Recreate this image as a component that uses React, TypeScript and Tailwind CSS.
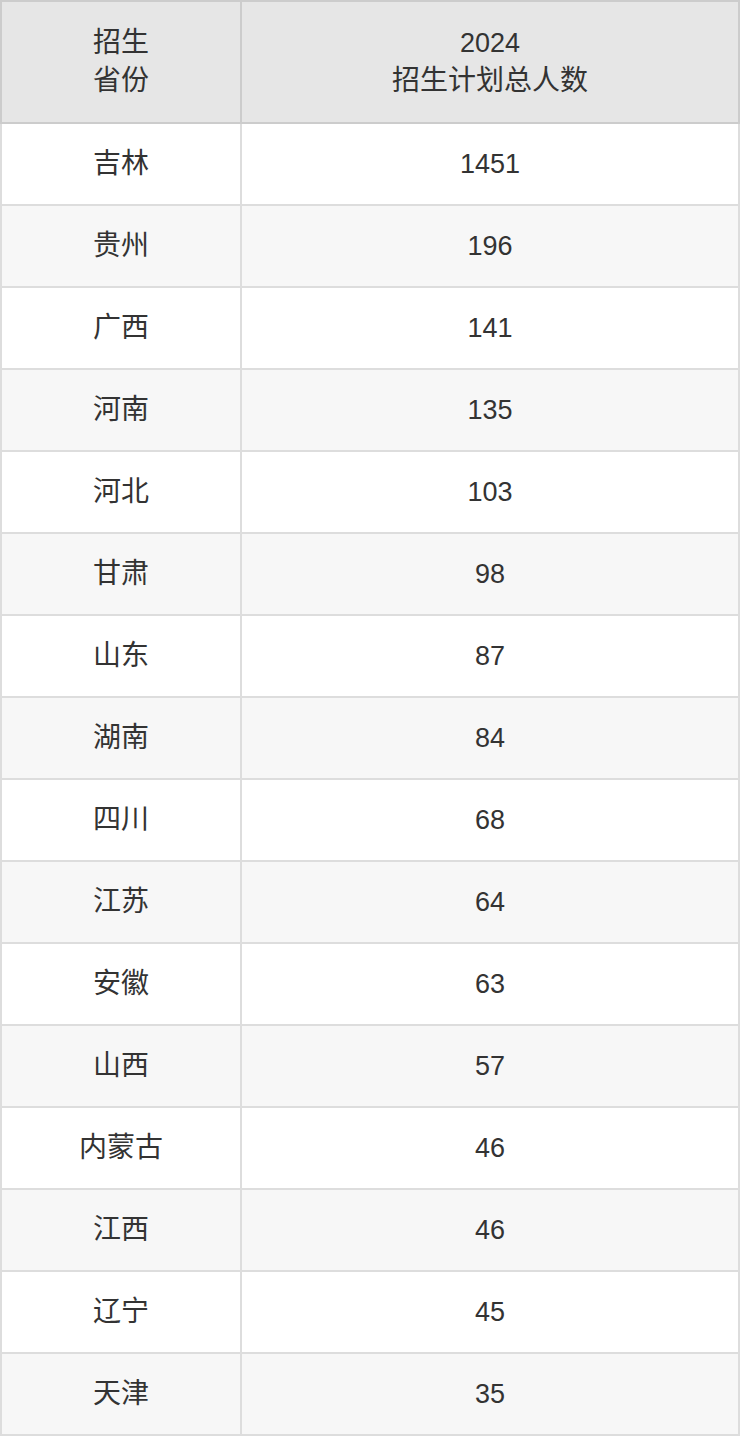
import React from "react";

const rows: [string, string][] = [
  ["吉林", "1451"],
  ["贵州", "196"],
  ["广西", "141"],
  ["河南", "135"],
  ["河北", "103"],
  ["甘肃", "98"],
  ["山东", "87"],
  ["湖南", "84"],
  ["四川", "68"],
  ["江苏", "64"],
  ["安徽", "63"],
  ["山西", "57"],
  ["内蒙古", "46"],
  ["江西", "46"],
  ["辽宁", "45"],
  ["天津", "35"],
];

export default function App() {
  return (
    <div
      className="w-[740px] bg-white text-[#333333]"
      style={{ fontFamily: '"Liberation Sans", "Noto Sans CJK SC", sans-serif' }}
    >
      <table className="w-[740px] border-collapse table-fixed border-2 border-[#cccccc] text-[28px]">
        <colgroup>
          <col className="w-[240px]" />
          <col />
        </colgroup>
        <thead>
          <tr className="bg-[#e6e6e6]">
            <th className="h-[122px] border-2 border-[#cccccc] font-normal text-center align-middle leading-[38px]">
              招生
              <br />
              省份
            </th>
            <th className="h-[122px] border-2 border-[#cccccc] font-normal text-center align-middle leading-[38px]">
              <span className="text-[27px]">2024</span>
              <br />
              招生计划总人数
            </th>
          </tr>
        </thead>
        <tbody>
          {rows.map(([p, n], i) => (
            <tr key={i} className={i % 2 === 0 ? "bg-white" : "bg-[#f7f7f7]"}>
              <td className="h-[82px] border-2 border-[#dddddd] text-center align-middle">{p}</td>
              <td className="h-[82px] border-2 border-[#dddddd] text-center align-middle text-[27px]">{n}</td>
            </tr>
          ))}
        </tbody>
      </table>
    </div>
  );
}
